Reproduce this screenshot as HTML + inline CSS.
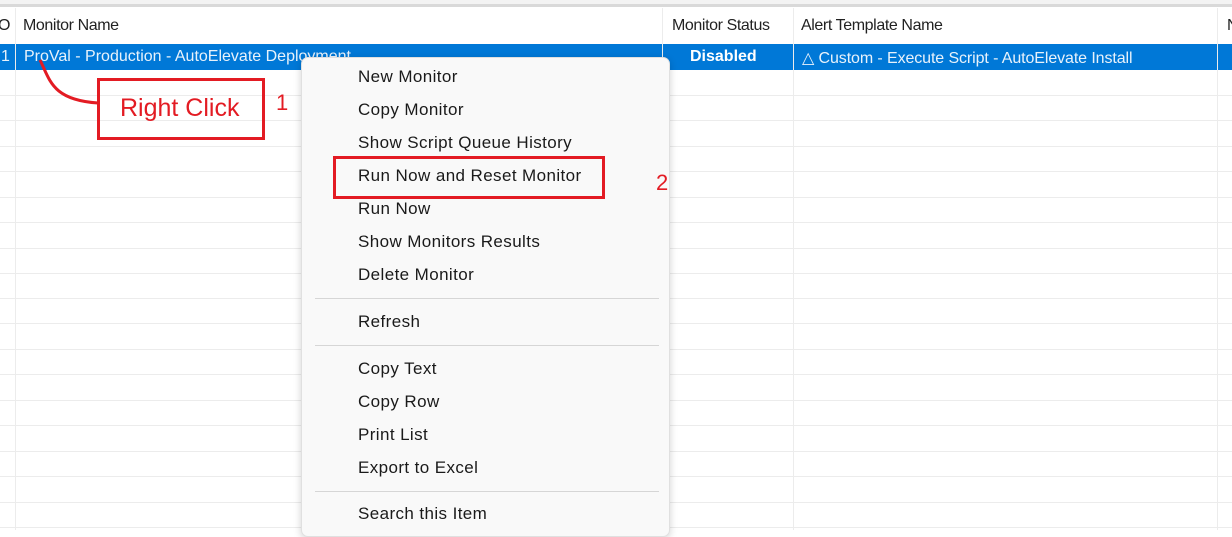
<!DOCTYPE html>
<html><head><style>
*{margin:0;padding:0;box-sizing:border-box}
body{width:1232px;height:530px;overflow:hidden;background:#fff;position:relative;font-family:"Segoe UI","Liberation Sans",sans-serif;}
.a{position:absolute}
.hl{position:absolute;left:0;width:1232px;height:1px;background:#ececec}
.vl{position:absolute;top:8px;bottom:0;width:1px;background:#ececec}
.hd{position:absolute;top:17px;font-size:16px;color:#222;letter-spacing:-0.4px}
.menu{position:absolute;left:301px;top:57px;width:369px;height:480px;background:#f9f9f9;border:1px solid #e0e0e0;border-radius:7px;box-shadow:0 2px 8px rgba(0,0,0,.18)}
.mi{position:absolute;left:56px;font-size:17px;color:#1a1a1a;letter-spacing:0.4px;line-height:20px}
.sep{position:absolute;left:13px;width:344px;height:1px;background:#d6d6d6}
.red{position:absolute;border:3px solid #e31b23}
.rt{position:absolute;color:#e31b23;font-size:25px}
</style></head><body>
<div class="a" style="left:0;top:0;width:1232px;height:4px;background:#f3f3f3"></div>
<div class="a" style="left:0;top:4px;width:1232px;height:3px;background:#d9d9d9"></div>
<div class="hl" style="top:44px"></div>
<div class="a" style="left:0;top:44px;width:1232px;height:26px;background:#0078d7"></div>
<div class="hl" style="top:95px"></div><div class="hl" style="top:120px"></div><div class="hl" style="top:146px"></div>
<div class="hl" style="top:171px"></div><div class="hl" style="top:197px"></div><div class="hl" style="top:222px"></div>
<div class="hl" style="top:248px"></div><div class="hl" style="top:273px"></div><div class="hl" style="top:298px"></div>
<div class="hl" style="top:323px"></div><div class="hl" style="top:349px"></div><div class="hl" style="top:374px"></div>
<div class="hl" style="top:400px"></div><div class="hl" style="top:425px"></div><div class="hl" style="top:451px"></div>
<div class="hl" style="top:476px"></div><div class="hl" style="top:502px"></div><div class="hl" style="top:527px"></div>
<div class="vl" style="left:15px"></div><div class="vl" style="left:662px"></div><div class="vl" style="left:793px"></div><div class="vl" style="left:1217px"></div>
<div class="hd" style="left:-2px">O</div>
<div class="hd" style="left:23px">Monitor Name</div>
<div class="hd" style="left:672px">Monitor Status</div>
<div class="hd" style="left:801px">Alert Template Name</div>
<div class="hd" style="left:1227px">N</div>
<div class="a" style="left:1px;top:48px;font-size:16px;color:#e8f2fb">1</div>
<div class="a" style="left:24px;top:48px;font-size:16px;color:#e8f2fb;letter-spacing:0px">ProVal - Production - AutoElevate Deployment</div>
<div class="a" style="left:690px;top:48px;font-size:16px;color:#fff;font-weight:bold">Disabled</div>
<div class="a" style="left:802px;top:48px;font-size:16px;color:#e8f2fb;letter-spacing:-0.1px">△ Custom - Execute Script - AutoElevate Install</div>
<div class="menu">
<div class="mi" style="top:9px">New Monitor</div>
<div class="mi" style="top:42px">Copy Monitor</div>
<div class="mi" style="top:75px">Show Script Queue History</div>
<div class="mi" style="top:108px">Run Now and Reset Monitor</div>
<div class="mi" style="top:141px">Run Now</div>
<div class="mi" style="top:174px">Show Monitors Results</div>
<div class="mi" style="top:207px">Delete Monitor</div>
<div class="sep" style="top:240px"></div>
<div class="mi" style="top:254px">Refresh</div>
<div class="sep" style="top:287px"></div>
<div class="mi" style="top:301px">Copy Text</div>
<div class="mi" style="top:334px">Copy Row</div>
<div class="mi" style="top:367px">Print List</div>
<div class="mi" style="top:400px">Export to Excel</div>
<div class="sep" style="top:433px"></div>
<div class="mi" style="top:446px">Search this Item</div>
</div>
<svg class="a" style="left:0;top:0" width="120" height="120"><path d="M40 60 C50 80,52 100,98 103" stroke="#e31b23" stroke-width="3" fill="none"/></svg>
<div class="red" style="left:97px;top:78px;width:168px;height:62px"></div>
<div class="rt" style="left:120px;top:94px">Right Click</div>
<div class="rt" style="left:276px;top:90px;font-size:22px">1</div>
<div class="red" style="left:333px;top:156px;width:272px;height:43px"></div>
<div class="rt" style="left:656px;top:170px;font-size:22px">2</div>
</body></html>
